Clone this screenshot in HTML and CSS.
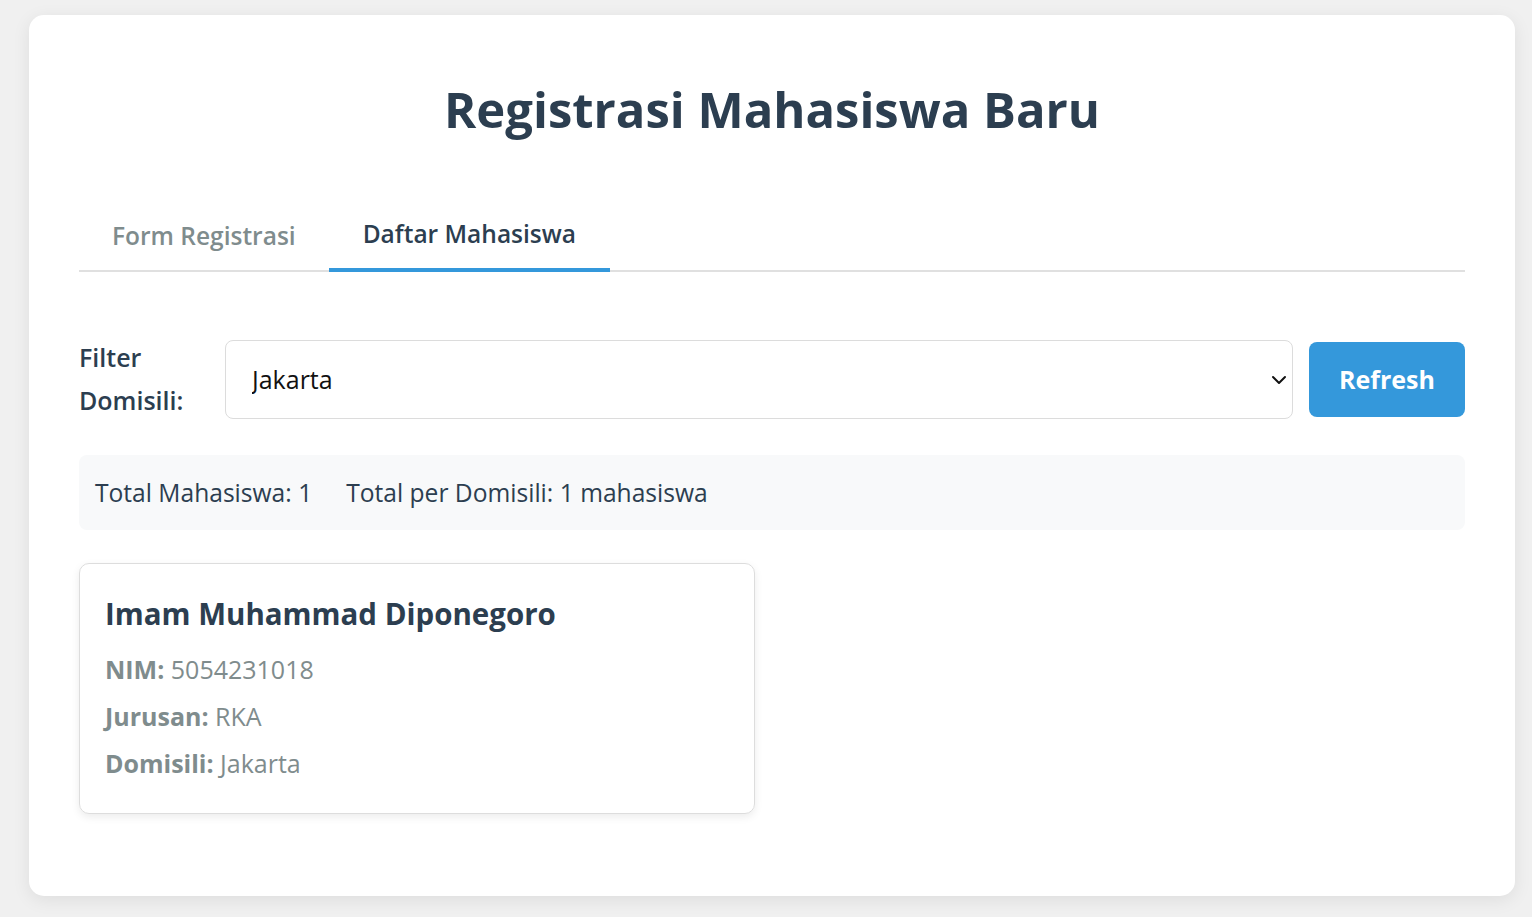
FILE: index.html
```html
<!DOCTYPE html>
<html lang="id">
<head>
<meta charset="utf-8">
<title>Registrasi Mahasiswa Baru</title>
<link rel="stylesheet" href="styles.css">
</head>
<body>
<div class="container">
  <h1 class="title">Registrasi Mahasiswa Baru</h1>
  <div class="tabs">
    <button class="tab">Form Registrasi</button>
    <button class="tab active">Daftar Mahasiswa</button>
  </div>
  <div class="filter-row">
    <label class="filter-label" for="domisili">Filter Domisili:</label>
    <div class="select-wrap">
      <select id="domisili" class="select">
        <option>Jakarta</option>
      </select>
      <svg class="chevron" width="16" height="10" viewBox="0 0 16 10"><path d="M2 2 L8 8 L14 2" fill="none" stroke="#111" stroke-width="2" stroke-linecap="round" stroke-linejoin="round"/></svg>
    </div>
    <button class="btn">Refresh</button>
  </div>
  <div class="stats">
    <span>Total Mahasiswa: 1</span>
    <span>Total per Domisili: 1 mahasiswa</span>
  </div>
  <div class="cards">
    <div class="card">
      <h3 class="card-name">Imam Muhammad Diponegoro</h3>
      <p class="card-line"><strong>NIM:</strong> 5054231018</p>
      <p class="card-line"><strong>Jurusan:</strong> RKA</p>
      <p class="card-line"><strong>Domisili:</strong> Jakarta</p>
    </div>
  </div>
</div>
</body>
</html>
```
FILE: styles.css
```css
* { box-sizing: border-box; }
html, body { margin: 0; padding: 0; }
body {
  background: #f0f0f0;
  font-family: "Open Sans", "Noto Sans", sans-serif;
  color: #2c3e50;
  padding: 15px 17px 21px 29px;
}
.container {
  background: #fff;
  border-radius: 15px;
  box-shadow: 0 4px 18px rgba(0,0,0,0.08);
  padding: 50px;
  height: 881px;
}
.title {
  margin: 12px 0 0;
  text-align: center;
  font-size: 49px;
  line-height: 64px;
  font-weight: 700;
  color: #2c3e50;
}
.tabs {
  display: flex;
  margin-top: 65px;
  border-bottom: 2px solid #e0e0e0;
}
.tab {
  font-family: inherit;
  background: none;
  border: none;
  border-bottom: 4px solid transparent;
  margin-bottom: -2px;
  padding: 12px 33px 14px;
  font-size: 24.5px;
  line-height: 36px;
  font-weight: 600;
  color: #7f8c8d;
  cursor: pointer;
}
.tab.active {
  color: #2c3e50;
  border-bottom-color: #3498db;
  padding: 10px 34px 16px;
}
.filter-row {
  display: flex;
  align-items: center;
  gap: 16px;
  margin-top: 64px;
}
.filter-label {
  width: 130px;
  flex: none;
  font-size: 25px;
  line-height: 43px;
  font-weight: 600;
  color: #2c3e50;
}
.select-wrap {
  position: relative;
  flex: 1;
}
.select {
  appearance: none;
  -webkit-appearance: none;
  width: 100%;
  height: 79px;
  border: 1px solid #dcdcdc;
  border-radius: 8px;
  background: #fff;
  padding: 0 26px;
  font-family: inherit;
  font-size: 25px;
  color: #111;
}
.chevron {
  position: absolute;
  right: 6px;
  top: 35px;
  pointer-events: none;
}
.btn {
  flex: none;
  width: 156px;
  height: 75px;
  border: none;
  border-radius: 8px;
  background: #3498db;
  color: #fff;
  font-family: inherit;
  font-size: 25px;
  font-weight: 700;
}
.stats {
  margin-top: 33px;
  background: #f8f9fa;
  border-radius: 8px;
  height: 75px;
  display: flex;
  align-items: center;
  gap: 34px;
  padding: 0 16px;
  font-size: 24.6px;
  color: #2c3e50;
}
.cards {
  display: grid;
  grid-template-columns: 1fr 1fr;
  gap: 34px;
  margin-top: 33px;
}
.card {
  border: 1px solid #dddddd;
  border-radius: 10px;
  box-shadow: 0 3px 8px rgba(0,0,0,0.08);
  padding: 28px 25px 20px;
  height: 251px;
}
.card-name {
  margin: 0 0 10px;
  font-size: 29.5px;
  line-height: 44px;
  font-weight: 700;
  color: #2c3e50;
}
.card-line {
  margin: 0;
  font-size: 25px;
  line-height: 47px;
  color: #7f8c8d;
}
.card-line strong { font-weight: 700; }
```
